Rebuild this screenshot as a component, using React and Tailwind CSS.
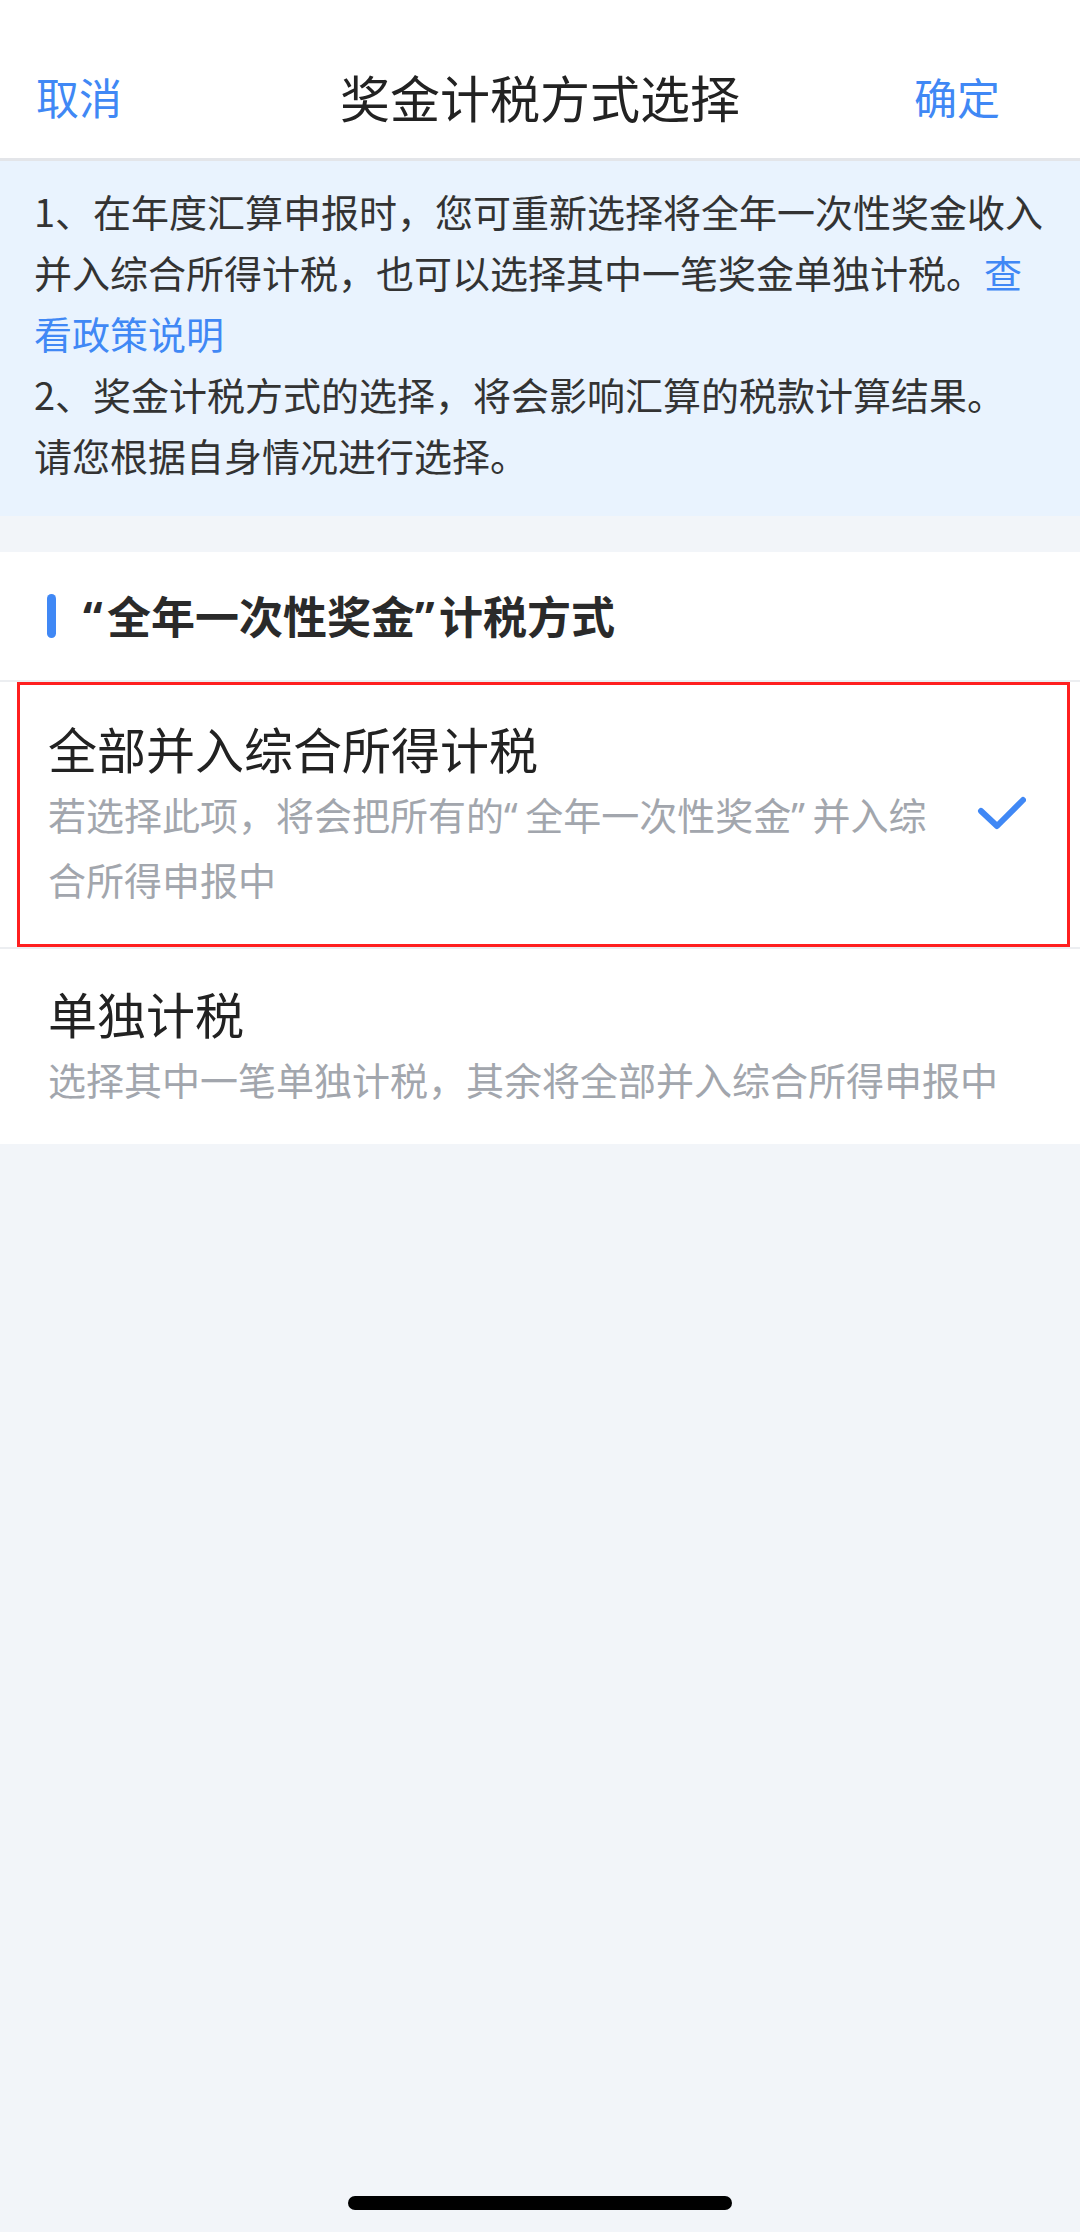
import React from 'react';

const font = { fontFamily: '"Noto Sans CJK SC", "Noto Sans", sans-serif' };
const latin = { fontFamily: '"Noto Sans", sans-serif' };

// narrow curly quotes, as in the reference's system font
const LQ = ({ gap = 'pr-[0.2em]' }) => <span className={gap} style={latin}>“</span>;
const RQ = ({ gap = 'pr-[0.2em]' }) => <span className={gap} style={latin}>”</span>;

const CheckMark = () => (
  <svg width="50" height="36" viewBox="0 0 50 36" fill="none">
    <path d="M5 16 L21 31 L47 5" stroke="#4088f5" strokeWidth="6" strokeLinecap="round" strokeLinejoin="round" />
  </svg>
);

const OptionRow = ({ title, children, checked, highlighted, className }) => (
  <div className={`relative flex items-center pl-[48px] ${className}`}>
    <div className={checked ? 'w-[892px]' : 'flex-1 pr-[20px]'}>
      <div className="text-[49px] leading-[64px] text-[#222]">{title}</div>
      <div className="mt-[2px] text-[38px] leading-[63px] text-[#a2a6ad]">{children}</div>
    </div>
    {checked && (
      <div className="ml-auto mr-[54px]">
        <CheckMark />
      </div>
    )}
    {highlighted && (
      <div className="absolute left-[17px] right-[10px] top-0 bottom-0 border-[3px] border-[#ff1f1f] pointer-events-none" />
    )}
  </div>
);

export default function App() {
  return (
    <div className="relative min-h-[2232px] bg-[#f2f5f9]" style={font}>
      {/* Nav bar */}
      <div className="h-[161px] bg-white border-b-[3px] border-[#e3e5e9] pt-[34px]">
        <div className="grid grid-cols-[1fr_auto_1fr] items-center h-full">
          <button className="justify-self-start pl-[36px] text-[43px] text-[#4088f5]">取消</button>
          <h1 className="text-[50px] text-[#222] font-normal">奖金计税方式选择</h1>
          <button className="justify-self-end pr-[80px] text-[43px] text-[#4088f5]">确定</button>
        </div>
      </div>

      {/* Notice */}
      <div className="bg-[#e9f3fe] pl-[34px] pr-[32px] pt-[19px] pb-[31px] text-[38px] leading-[61px] text-[#333]">
        <p>
          1、在年度汇算申报时，您可重新选择将全年一次性奖金收入并入综合所得计税，也可以选择其中一笔奖金单独计税。
          <span className="text-[#4088f5]">查看政策说明</span>
        </p>
        <p>
          2、奖金计税方式的选择，将会影响汇算的税款计算结果。
          <br />
          请您根据自身情况进行选择。
        </p>
      </div>

      {/* Options */}
      <div className="mt-[36px] bg-white">
        <div className="h-[130px] flex items-center border-b-2 border-[#eceef1]">
          <div className="ml-[47px] w-[9px] h-[44px] rounded-full bg-[#4088f5]" />
          <div className="ml-[27px] text-[44px] font-bold text-[#2a2a2a]">
            <LQ gap="pr-[0.1em]" />全年一次性奖金<RQ gap="pr-[0.1em]" />计税方式
          </div>
        </div>
        <OptionRow
          title="全部并入综合所得计税"
          checked
          highlighted
          className="pt-[34px] pb-[37px] border-b-2 border-[#eceef1]"
        >
          若选择此项，将会把所有的<LQ />全年一次性奖金<RQ />并入综合所得申报中
        </OptionRow>
        <OptionRow title="单独计税" className="pt-[32px] pb-[34px]">
          选择其中一笔单独计税，其余将全部并入综合所得申报中
        </OptionRow>
      </div>

      {/* Home indicator */}
      <div className="absolute bottom-[22px] left-1/2 -translate-x-1/2 w-[384px] h-[14px] rounded-full bg-black" />
    </div>
  );
}
